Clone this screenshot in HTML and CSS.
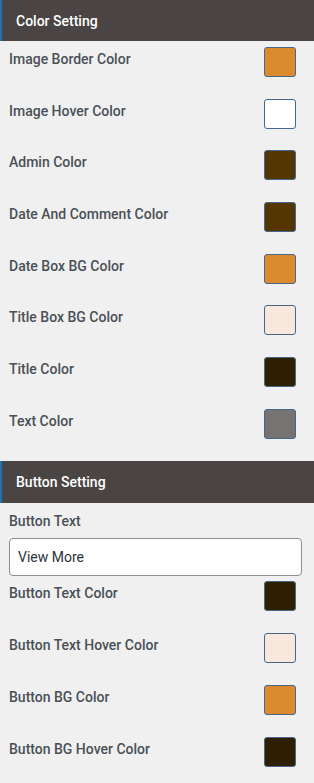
FILE: index.html
```html
<!DOCTYPE html>
<html lang="en">
<head>
  <meta charset="UTF-8" />
  <meta name="viewport" content="width=device-width, initial-scale=1" />
  <title>Settings</title>
  <link rel="stylesheet" href="styles.css">
</head>
<body>
  <section class="panel">
    <h2 class="panel-title">Color Setting</h2>
    <div class="row"><span class="label">Image Border Color</span><span class="swatch" style="background:#db8b2e"></span></div>
    <div class="row"><span class="label">Image Hover Color</span><span class="swatch" style="background:#ffffff"></span></div>
    <div class="row"><span class="label">Admin Color</span><span class="swatch" style="background:#553600"></span></div>
    <div class="row"><span class="label">Date And Comment Color</span><span class="swatch" style="background:#553600"></span></div>
    <div class="row"><span class="label">Date Box BG Color</span><span class="swatch" style="background:#db8b2e"></span></div>
    <div class="row"><span class="label">Title Box BG Color</span><span class="swatch" style="background:#f7e7dc"></span></div>
    <div class="row"><span class="label">Title Color</span><span class="swatch" style="background:#2e1f00"></span></div>
    <div class="row"><span class="label">Text Color</span><span class="swatch" style="background:#777373"></span></div>
  </section>

  <section class="panel panel-buttons">
    <h2 class="panel-title">Button Setting</h2>
    <div class="field">
      <label class="label" for="btn-text">Button Text</label>
      <input id="btn-text" class="text-input" type="text" value="View More" />
    </div>
    <div class="row"><span class="label">Button Text Color</span><span class="swatch" style="background:#2e1f00"></span></div>
    <div class="row"><span class="label">Button Text Hover Color</span><span class="swatch" style="background:#f7e7dc"></span></div>
    <div class="row"><span class="label">Button BG Color</span><span class="swatch" style="background:#db8b2e"></span></div>
    <div class="row"><span class="label">Button BG Hover Color</span><span class="swatch" style="background:#2e1f00"></span></div>
  </section>
</body>
</html>
```

FILE: styles.css
```css
:root {
  --font-sans: Roboto, 'Noto Sans', 'Liberation Sans', sans-serif;
  --bg: #f0f0f1;
  --header-bg: #4a4544;
  --accent: #2271b1;
  --label: #4a5056;
  --swatch-border: #46678a;
}
*, *::before, *::after { box-sizing: border-box; }

html, body {
  margin: 0;
  padding: 0;
}
body {
  background: var(--bg);
  font-family: var(--font-sans);
  color: var(--label);
  width: 314px;
  height: 783px;
  overflow: hidden;
}

.panel-buttons { margin-top: 6px; }

.panel-title {
  margin: 0;
  height: 41px;
  display: flex;
  align-items: center;
  padding-left: 14px;
  border-left: 2px solid var(--accent);
  background: var(--header-bg);
  color: #fff;
  font-size: 14px;
  font-weight: 500;
}
.panel-buttons .panel-title { height: 42px; }

.row {
  height: 51.7px;
  display: flex;
  justify-content: space-between;
  align-items: flex-start;
  padding: 6px 18px 0 9px;
}
.panel-buttons .row { height: 52px; }

.label {
  display: block;
  font-size: 14px;
  font-weight: 500;
  line-height: 24px;
  color: var(--label);
}
.swatch {
  width: 32px;
  height: 30px;
  border: 1px solid var(--swatch-border);
  border-radius: 3px;
}

.field {
  padding: 6px 12px 0 9px;
  height: 72px;
}
.text-input {
  display: block;
  width: 293px;
  height: 38px;
  margin-top: 5px;
  padding: 0 8px;
  border: 1px solid #8c8f94;
  border-radius: 4px;
  background: #fff;
  font-family: var(--font-sans);
  font-size: 14px;
  color: #2c3338;
}
```
